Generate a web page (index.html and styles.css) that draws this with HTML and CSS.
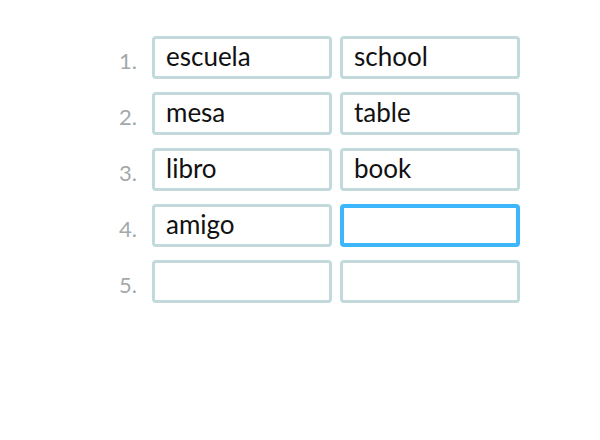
FILE: index.html
```html
<!DOCTYPE html>
<html>
<head>
<meta charset="utf-8">
<link rel="stylesheet" href="styles.css">
</head>
<body>
<div class="list">
  <div class="row"><span class="num">1.</span><div class="box">escuela</div><div class="box">school</div></div>
  <div class="row"><span class="num">2.</span><div class="box">mesa</div><div class="box">table</div></div>
  <div class="row"><span class="num">3.</span><div class="box">libro</div><div class="box">book</div></div>
  <div class="row"><span class="num">4.</span><div class="box">amigo</div><div class="box active"></div></div>
  <div class="row"><span class="num">5.</span><div class="box"></div><div class="box"></div></div>
</div>
</body>
</html>
```
FILE: styles.css
```css
html, body { margin: 0; padding: 0; background: #fff; }
body { font-family: "Lato", "Open Sans", sans-serif; width: 600px; height: 440px; }
.list { padding: 36px 0 0 119px; display: flex; flex-direction: column; gap: 13px; }
.row { display: flex; align-items: center; gap: 8px; }
.num { width: 25px; font-size: 22px; color: #a3a9ab; padding-top: 6px; }
.box {
  box-sizing: border-box;
  width: 180px; height: 43px;
  border: 3px solid #c3dadd; border-radius: 4px;
  padding: 0 0 0 11px;
  font-size: 26px; color: #111;
  line-height: 35px;
}
.box.active { border: 4px solid #3db6fc; }
```
